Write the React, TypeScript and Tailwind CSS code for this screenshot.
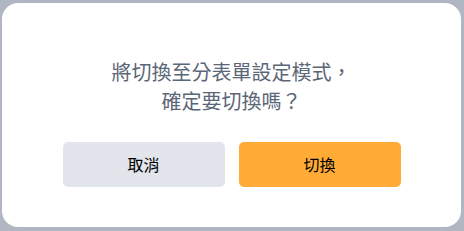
export default function App() {
  return (
    <div
      className="flex h-[231px] w-[464px] bg-[#b0b7c2] pb-[4px] pl-[2px] pr-[3px] pt-[3px]"
      style={{ fontFamily: '"Noto Sans", "Noto Sans CJK TC", sans-serif' }}
    >
      <div className="flex flex-1 flex-col items-center rounded-[16px] bg-white pt-[55px]">
        <p className="text-center text-[20px] leading-[29px] text-[#5b6677]">
          將切換至分表單設定模式，
          <br />
          確定要切換嗎？
        </p>
        <div className="mt-[26px] flex gap-[14px]">
          <button className="h-[45px] w-[162px] rounded-[5px] bg-[#e2e5ec] text-[16px] font-normal text-black">
            取消
          </button>
          <button className="h-[45px] w-[162px] rounded-[5px] bg-[#ffab36] text-[16px] font-normal text-black">
            切換
          </button>
        </div>
      </div>
    </div>
  );
}
